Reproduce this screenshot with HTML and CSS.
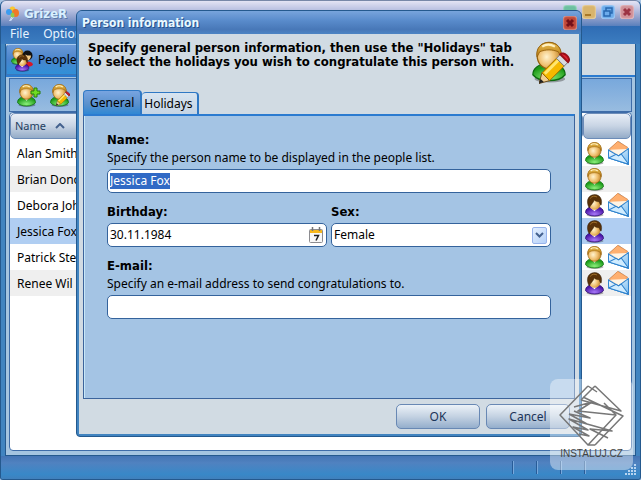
FILE: index.html
```
<!DOCTYPE html>
<html lang="en">
<head>
<meta charset="utf-8">
<title>GrizeR</title>
<link rel="stylesheet" href="styles.css">
</head>
<body>
<svg class="defs" aria-hidden="true">
  <defs>
    <radialGradient id="skin" cx="40%" cy="55%" r="65%"><stop offset="0" stop-color="#fff3cf"/><stop offset=".5" stop-color="#f0c070"/><stop offset="1" stop-color="#b87a20"/></radialGradient>
    <linearGradient id="blond" x1="0" y1="0" x2="0" y2="1"><stop offset="0" stop-color="#e8bc50"/><stop offset="1" stop-color="#b87c14"/></linearGradient>
    <radialGradient id="green" cx="50%" cy="80%" r="60%"><stop offset="0" stop-color="#8cf07c"/><stop offset="1" stop-color="#1c9a18"/></radialGradient>
    <radialGradient id="violet" cx="50%" cy="80%" r="60%"><stop offset="0" stop-color="#a878f8"/><stop offset="1" stop-color="#4a14a8"/></radialGradient>
    <linearGradient id="paper" x1="0" y1="0" x2="1" y2="1"><stop offset="0" stop-color="#ffffff"/><stop offset="1" stop-color="#6fb8f0"/></linearGradient>
  </defs>
  <symbol id="man" viewBox="0 0 40 48">
    <ellipse cx="21" cy="44" rx="18" ry="4" fill="#000" opacity=".3"/>
    <path d="M1 39c0-8 7-13 19-13s19 5 19 13c-4 5-11 7-19 7S5 44 1 39z" fill="url(#green)" stroke="#0d6a10" stroke-width="1.5"/>
    <path d="M15 30l5 5 5-5z" fill="#fff"/>
    <path d="M6 16C6 7 12 1 20 1s14 6 14 15-6 16-14 16S6 25 6 16z" fill="url(#skin)" stroke="#94600c" stroke-width="1.5"/>
    <path d="M6 18C4 8 11 1 20 1s16 7 14 17l-3-6c-7-3-15-3-22 0z" fill="url(#blond)" stroke="#94600c"/>
    <path d="M12 6c4-3 10-3 15 0" fill="none" stroke="#fff0c0" stroke-width="2.500"/>
  </symbol>
  <symbol id="woman" viewBox="0 0 40 48">
    <ellipse cx="21" cy="44" rx="18" ry="4" fill="#000" opacity=".3"/>
    <path d="M1 39c0-8 7-13 19-13s19 5 19 13c-4 5-11 7-19 7S5 44 1 39z" fill="url(#violet)" stroke="#2a0c6a" stroke-width="1.5"/>
    <path d="M12 29l8 7 7-7z" fill="#fff"/>
    <path d="M8 18C8 8 13 3 20 3s13 6 13 15-6 15-13 15S8 27 8 18z" fill="url(#skin)"/>
    <path d="M9 29C2 18 4 2 20 1c13 0 17 12 14 22-2 0-3-4-4-7-5 0-8-1-11-4-1 7-6 9-10 17z" fill="#5a3208" stroke="#2c1a06"/>
    <path d="M11 9c4-5 9-6 14-3" fill="none" stroke="#a87830" stroke-width="2"/>
  </symbol>
  <symbol id="pencil" viewBox="0 0 32 32">
    <path d="M0 32l3-11 8 8z" fill="#f0cf94" stroke="#6b4a1c"/>
    <path d="M0 32l1.500-5 3.500 3.500z" fill="#222"/>
    <path d="M3 21L18 6l8 8-15 15z" fill="#f5b800" stroke="#9a6500"/>
    <path d="M6 22L20 8" stroke="#ffe670" stroke-width="3"/>
    <path d="M18 6l4-4 8 8-4 4z" fill="#d8dbe0" stroke="#777"/>
    <path d="M22 2c3-4 12 4 8 8z" fill="#dc2030" stroke="#991018" stroke-width="2"/>
  </symbol>
  <symbol id="mail" viewBox="0 0 62 72" preserveAspectRatio="none">
    <path d="M1 27L31 1l29 22 1 47L2 51z" fill="#e7f6ff" stroke="#3a90d8" stroke-width="2"/>
    <path d="M4 24L29 1l29 18-26 24z" fill="#ffb070" stroke="#e08038" stroke-width="2"/>
    <path d="M6 26l50-2-25 20z" fill="#fff4e4"/>
    <path d="M1 27l30 18L60 23l1 47L2 51z" fill="url(#paper)" stroke="#2c80cc" stroke-width="3"/>
    <path d="M2 51l22-11 7 5 8-6 22 31z" fill="#d0ecff" stroke="#2c80cc" stroke-width="3"/>
  </symbol>
</svg>

<div class="window">
  <header class="titlebar">
    <svg class="logo" viewBox="0 0 14 16" aria-hidden="true">
      <path d="M8 8L4 15M10 8l-5 7" stroke="#d8e8ff"/>
      <ellipse cx="7" cy="4" rx="3" ry="3.500" fill="#f8c830"/><ellipse cx="3.500" cy="6" rx="3" ry="3" fill="#3c9cf0"/>
      <ellipse cx="10" cy="7" rx="3.500" ry="4" fill="#f07828"/><ellipse cx="7" cy="9" rx="2" ry="2.500" fill="#8ccc50"/>
    </svg>
    <h1>GrizeR</h1>
    <div class="controls">
      <button class="control green" aria-label="Help"></button>
      <button class="control yellow" aria-label="Minimize"><svg viewBox="0 0 14 14"><path d="M3 10h6" stroke="#a87828" stroke-width="2"/></svg></button>
      <button class="control blue" aria-label="Restore"><svg viewBox="0 0 14 14"><path d="M5 6V3h6v5H9M3 6h6v5H3z" fill="none" stroke="#2868b0" stroke-width="1.500"/></svg></button>
      <button class="control red" aria-label="Close"><svg viewBox="0 0 14 14"><path d="M4 4l6 6M10 4l-6 6" stroke="#9c3444" stroke-width="3"/></svg></button>
    </div>
  </header>
  <nav class="menu"><a href="#">File</a><a href="#">Options</a></nav>
  <main class="client">
    <div class="sections">
      <button class="section">
        <svg class="group" viewBox="0 0 46 48" aria-hidden="true">
          <use href="#man" x="0" y="0" width="28" height="34"/>
          <g transform="translate(20 4)"><path d="M1 29c2-8 22-8 23 0-2 6-20 6-23 0z" fill="#d81828"/><circle cx="13" cy="11" r="10" fill="#111"/><path d="M9 9c4 3 8 2 11 2 0 9-8 12-11 7z" fill="#f4cc88"/></g>
          <use href="#woman" x="8" y="12" width="29" height="36"/>
        </svg>
        <span>People</span>
      </button>
    </div>
    <div class="workspace">
      <div class="toolbar">
        <button class="tool" aria-label="Add person"><svg viewBox="0 0 24 24"><use href="#man" x="0" y="1" width="19" height="23"/><path d="M14 8h3V5h3v3h3v3h-3v3h-3v-3h-3z" fill="#70dc20" stroke="#287c08"/></svg></button>
        <button class="tool" aria-label="Edit person"><svg viewBox="0 0 24 24"><use href="#man" x="0" y="1" width="19" height="23"/><use href="#pencil" x="6" y="8" width="14" height="15"/></svg></button>
      </div>
      <div class="list">
        <table>
          <thead><tr><th class="name" scope="col"><span class="head">Name <svg class="sort" viewBox="0 0 10 6"><path d="M1 5l4-4 4 4" fill="none" stroke="#44618e" stroke-width="2"/></svg></span></th><th class="status" scope="col"><span class="head"></span></th></tr></thead>
          <tbody>
            <tr><td>Alan Smith</td><td class="status"><svg class="who"><use href="#man"/></svg><svg class="post"><use href="#mail"/></svg></td></tr>
            <tr><td>Brian Dono</td><td class="status"><svg class="who"><use href="#man"/></svg></td></tr>
            <tr><td>Debora Joh</td><td class="status"><svg class="who"><use href="#woman"/></svg><svg class="post"><use href="#mail"/></svg></td></tr>
            <tr class="selected"><td>Jessica Fox</td><td class="status"><svg class="who"><use href="#woman"/></svg></td></tr>
            <tr><td>Patrick Ste</td><td class="status"><svg class="who"><use href="#man"/></svg><svg class="post"><use href="#mail"/></svg></td></tr>
            <tr><td>Renee Wil</td><td class="status"><svg class="who"><use href="#woman"/></svg><svg class="post"><use href="#mail"/></svg></td></tr>
          </tbody>
        </table>
      </div>
    </div>
  </main>
  <footer class="statusbar"><i></i><i></i><i></i><i></i>
    <svg class="grip" viewBox="0 0 12 12"><path d="M9 1h2M6 4h2M9 4h2M3 7h2M6 7h2M9 7h2M0 10h2M3 10h2M6 10h2M9 10h2" stroke="#b8d4f0" stroke-width="2"/></svg>
  </footer>
</div>

<form class="dialog" role="dialog" aria-labelledby="dialog-title">
  <header class="dialog-title">
    <h2 id="dialog-title">Person information</h2>
    <button type="button" class="control close" aria-label="Close dialog"><svg viewBox="0 0 14 14"><path d="M4 4l6 6M10 4l-6 6" stroke="#741018" stroke-width="3"/></svg></button>
  </header>
  <div class="dialog-body">
    <div class="intro">
      <p>Specify general person information, then use the "Holidays" tab<br>to select the holidays you wish to congratulate this person with.</p>
      <svg class="portrait" viewBox="0 0 40 46" aria-hidden="true"><use href="#man" x="0" y="0" width="34" height="42"/><use href="#pencil" x="7" y="11" width="31" height="32"/></svg>
    </div>
    <div class="tabs" role="tablist">
      <button type="button" class="tab active" role="tab" aria-selected="true">General</button><button type="button" class="tab" role="tab" aria-selected="false">Holidays</button>
    </div>
    <div class="panel" role="tabpanel">
      <div class="field">
        <label for="name">Name:</label>
        <p>Specify the person name to be displayed in the people list.</p>
        <div class="box"><input id="name" type="text" value="Jessica Fox"></div>
      </div>
      <div class="pair">
        <div class="field">
          <label for="birthday">Birthday:</label>
          <div class="box"><input id="birthday" type="text" value="30.11.1984">
            <button type="button" class="calendar" aria-label="Choose date"><svg viewBox="0 0 14 16"><rect x=".5" y="2.500" width="13" height="13" rx="1" fill="#f8f8f8" stroke="#8c8c90"/><path d="M1 3h12v3H1z" fill="#f8b81c"/><path d="M3.500 0v4M10.500 0v4" stroke="#777" stroke-width="1.500"/><path d="M5 8.500h4.500L7 13.500" fill="none" stroke="#222" stroke-width="1.500"/></svg></button>
          </div>
        </div>
        <div class="field">
          <label for="sex">Sex:</label>
          <div class="box"><select id="sex"><option>Female</option></select>
            <span class="arrow"><svg viewBox="0 0 9 6"><path d="M1 1l3.500 3.500L8 1" fill="none" stroke="#44618e" stroke-width="2"/></svg></span>
          </div>
        </div>
      </div>
      <div class="field">
        <label for="email">E-mail:</label>
        <p>Specify an e-mail address to send congratulations to.</p>
        <div class="box"><input id="email" type="text"></div>
      </div>
    </div>
    <div class="actions"><button type="submit" class="push">OK</button><button type="button" class="push">Cancel</button></div>
  </div>
</form>

<div class="watermark">
  <svg viewBox="0 0 66 62" aria-hidden="true"><g fill="none" stroke="#777" stroke-width="1.500" stroke-linejoin="round"><path d="M29 1L1 30l28 30 28-30-12-12M36 1L22 15M29 60h7M36 60L64 31 24 12M29 1l9 6M36 1l26 25L22 15"/><path d="M15 22l18-5-14 9 38 4M10 29l21 4-16-7M10 29l18 10-18-5 19 11-15-3 16 9-10-2M28 39l25 7-22-2 18 9"/></g></svg>
  <span>INSTALUJ.CZ</span>
</div>
<script src="app.js"></script>
</body>
</html>
```
FILE: styles.css
```
* { box-sizing: border-box; }
body { margin: 0; min-height: 100vh; display: flex; position: relative; background: #a8c4e4; color: #000; font: 12px/16px "Noto Sans", "DejaVu Sans", sans-serif; }
button, input, select { font: inherit; color: inherit; margin: 0; padding: 0; border: 0; background: none; }
h1, h2, p { margin: 0; font-size: inherit; }
svg { display: block; }
.defs { position: absolute; width: 0; height: 0; }

.window { flex: 1; display: flex; flex-direction: column; border: 1px solid #24598e; border-top-color: #7888a8; border-radius: 6px 6px 3px 3px; background: #4184c0; overflow: hidden; }
.titlebar { display: flex; align-items: center; gap: 4px; height: 25px; padding: 0 6px 0 4px; background: linear-gradient(#e4e4f4, #c0c6e4 30%, #8498c8 75%, #5a80bc); }
.logo { width: 15px; height: 16px; }
.titlebar h1 { flex: 1; font-family: "DejaVu Sans Condensed", "DejaVu Sans", sans-serif; font-size: 13px; color: #d8f0ff; text-shadow: 1px 1px 0 #5878a8; }
.controls { display: flex; gap: 5px; height: 17px; }
.control { width: 14px; height: 14px; border-radius: 3px; box-shadow: inset 0 0 2px #fff; }
.control svg { width: 14px; height: 14px; }
.green { background: #6cc0a0; }
.yellow { background: #d8b46c; }
.blue { background: #6cacec; }
.red { background: #d09098; }
.menu { display: flex; gap: 14px; height: 18px; padding: 0 9px; background: linear-gradient(#2f6cb4, #3c7dc0); }
.menu a { color: #e8f4ff; text-decoration: none; }
.client { flex: 1; display: flex; flex-direction: column; margin: 0 4px; border: 1px solid #24598e; border-width: 0 1px 1px; }
.sections { display: flex; height: 33px; background: #d1dbe3; border-bottom: 2px solid #2b7bd0; }
.section { display: flex; align-items: center; gap: 4px; width: 90px; padding: 0 4px; border: 1px solid #3a78bc; border-top-color: #a8ccf0; border-radius: 4px 4px 0 0; background: linear-gradient(#6a9ad8, #4a84cc 50%, #3090d8); }
.group { width: 23px; height: 24px; }
.workspace { flex: 1; display: flex; flex-direction: column; padding: 1px 3px 4px; background: #a4c4e0; }
.toolbar { display: flex; align-items: center; gap: 9px; height: 34px; padding: 0 7px; border: 1px solid #3e6ca8; background: linear-gradient(#78a8dc, #98bce0); }
.tool, .tool svg { width: 24px; height: 24px; }
.list { flex: 1; border: 1px solid #3e6ca8; border-radius: 4px; background: #fff; overflow: hidden; }
table { width: 100%; border-collapse: separate; border-spacing: 0; table-layout: fixed; }
th { height: 27px; padding: 0 0 1px; font-weight: 400; text-align: left; }
.head { display: flex; align-items: center; gap: 9px; height: 26px; padding: 0 4px; border: 1px solid #6c8cb8; border-radius: 5px; background: linear-gradient(#e8eef6, #c8d4e4 50%, #94acc8); color: #24405e; font-size: 11px; }
.sort { width: 10px; height: 6px; }
td { height: 26px; padding: 1px 7px 0; }
tbody tr:nth-child(even) { background: #efefef; }
tbody tr.selected { background: #b0cef2; }
th.status { width: 48px; }
td.status { padding: 0 2px; white-space: nowrap; font-size: 0; }
.who, .post { display: inline-block; vertical-align: middle; }
.who { width: 19px; height: 23px; margin-right: 4px; }
.post { width: 21px; height: 24px; }
.statusbar { display: flex; justify-content: flex-end; align-items: center; gap: 22px; height: 23px; padding: 0 3px 0 0; background: linear-gradient(#4474b4, #5082c0 30%, #3888c8 80%, #4080bc); }
.statusbar i { width: 2px; height: 13px; border-left: 1px solid #285c98; border-right: 1px solid #78a8dc; }
.grip { width: 12px; height: 12px; align-self: flex-end; margin: 0 0 3px 17px; }

.dialog { position: absolute; top: 10px; right: 59px; bottom: 43px; left: 76px; display: flex; flex-direction: column; padding: 0 2px 2px; border: 1px solid #24598e; border-radius: 6px 6px 4px 4px; background: #4184c0; overflow: hidden; }
.dialog-title { display: flex; align-items: center; height: 23px; margin: 0 -2px; padding: 0 4px 0 5px; background: linear-gradient(#78a4dc, #5a8ccc 40%, #4878b8 80%, #4c84c4); }
.dialog-title h2 { flex: 1; font-family: "DejaVu Sans Condensed", "DejaVu Sans", sans-serif; color: #e8f8ff; text-shadow: 1px 1px 0 #24508c; }
.close { background: #c04838; }
.dialog-body { flex: 1; display: flex; flex-direction: column; padding: 0 4px 5px; background: #d1dbe3; }
.intro { display: flex; justify-content: space-between; height: 56px; padding: 7px 3px 0 5px; }
.intro p { font: 700 13px/14px "DejaVu Sans Condensed", "DejaVu Sans", sans-serif; white-space: nowrap; }
.portrait { width: 40px; height: 46px; }
.tabs { display: flex; align-items: flex-end; height: 24px; }
.tab { height: 22px; padding: 0 4px 0 2px; border: 1px solid #2f78c4; border-width: 1px 2px 0 0; border-radius: 4px 4px 0 0; background: linear-gradient(#d8e4f0, #c4d4e4); }
.tab.active { height: 24px; padding: 0 6px; border-left-width: 1px; background: linear-gradient(#78a4e0, #5890cc 60%, #2f88d4); }
.panel { flex: 1; padding: 15px 23px; border: 1px solid #3c649c; border-top: 2px solid #2b7bd0; background: #a4c4e4; box-shadow: inset 1px 0 0 #c8e8f8; }
.field { margin-bottom: 10px; }
.field label { display: block; height: 18px; font: 700 13px/18px "DejaVu Sans Condensed", "DejaVu Sans", sans-serif; }
.field p { height: 18px; line-height: 18px; }
.pair { display: grid; grid-template-columns: 1fr 1fr; gap: 4px; }
.box { display: flex; align-items: center; height: 24px; margin-top: 2px; border: 1px solid #34639c; border-radius: 5px; background: #fff; padding: 0 3px 0 2px; }
.box input, .box select { flex: 1; min-width: 0; height: 16px; outline: 0; appearance: none; }
.box input::selection { background: #316ac5; color: #fff; }
.calendar, .calendar svg { width: 14px; height: 16px; }
.arrow { display: grid; place-items: center; width: 15px; height: 17px; border: 1px solid #98b4ec; border-radius: 2px; background: linear-gradient(135deg, #e4f0ff, #b4d0f8); pointer-events: none; }
.arrow svg { width: 9px; height: 6px; }
.actions { display: flex; justify-content: flex-end; gap: 6px; padding: 5px 5px 0; }
.push { width: 84px; height: 25px; border: 1px solid #6888b4; border-radius: 5px; background: linear-gradient(#ecf2f8, #c4d2e2 50%, #94aecc); color: #1c3458; }

.watermark { position: absolute; right: 8px; bottom: 10px; display: flex; flex-direction: column; align-items: center; width: 83px; height: 91px; padding-top: 6px; border-radius: 8px; background: rgba(255, 255, 255, .4); }
.watermark svg { width: 66px; height: 62px; }
.watermark span { color: #444; font: 10px/13px "Liberation Sans", sans-serif; }
```
FILE: app.js
```
const nameInput = document.getElementById('name');
nameInput.focus();
nameInput.select();
```
